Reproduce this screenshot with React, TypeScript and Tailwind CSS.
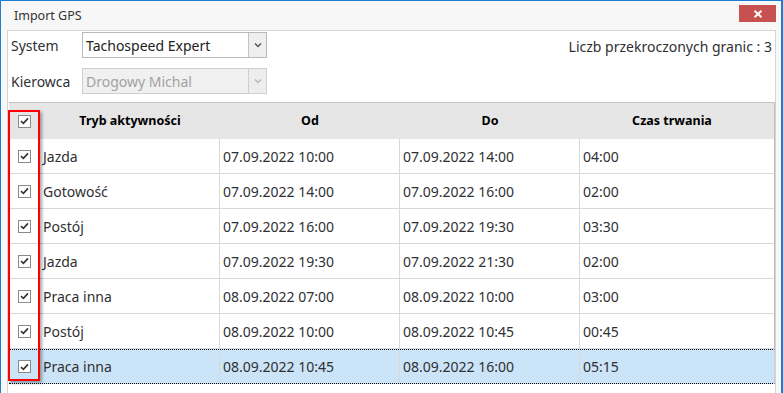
import React from 'react';

const rows = [
  { tryb: 'Jazda', od: '07.09.2022 10:00', do: '07.09.2022 14:00', czas: '04:00' },
  { tryb: 'Gotowość', od: '07.09.2022 14:00', do: '07.09.2022 16:00', czas: '02:00' },
  { tryb: 'Postój', od: '07.09.2022 16:00', do: '07.09.2022 19:30', czas: '03:30' },
  { tryb: 'Jazda', od: '07.09.2022 19:30', do: '07.09.2022 21:30', czas: '02:00' },
  { tryb: 'Praca inna', od: '08.09.2022 07:00', do: '08.09.2022 10:00', czas: '03:00' },
  { tryb: 'Postój', od: '08.09.2022 10:00', do: '08.09.2022 10:45', czas: '00:45' },
  { tryb: 'Praca inna', od: '08.09.2022 10:45', do: '08.09.2022 16:00', czas: '05:15' },
];

function Check() {
  return (
    <div className="w-[13px] h-[13px] border border-[#8a8a8a] bg-white flex items-center justify-center">
      <svg width="9" height="8" viewBox="0 0 9 8">
        <path d="M1 4.2 L3.4 6.4 L8 1.4" fill="none" stroke="#333" strokeWidth="1.6" />
      </svg>
    </div>
  );
}

function Combo({ value, disabled }: { value: string; disabled?: boolean }) {
  return (
    <div
      className={`flex h-[26px] w-[185px] border ${
        disabled ? 'border-[#cfcfcf] bg-[#f0f0f0] text-[#a2a2a2]' : 'border-[#b9b9b9] bg-white text-[#222]'
      }`}
    >
      <div className="flex-1 flex items-center pl-[3px] text-[14px]">{value}</div>
      <div
        className={`w-[18px] flex items-center justify-center border-l ${
          disabled ? 'border-[#cfcfcf] bg-[#ededed]' : 'border-[#c4c4c4] bg-[#efefef]'
        }`}
      >
        <svg width="8" height="6" viewBox="0 0 8 6">
          <path d="M1 1.5 L4 4.5 L7 1.5" fill="none" stroke={disabled ? '#b8b8b8' : '#555'} strokeWidth="1.5" />
        </svg>
      </div>
    </div>
  );
}

export default function App() {
  return (
    <div
      className="w-[783px] h-[393px] overflow-hidden bg-[#f7f7f7] border-t border-l border-r-2 border-[#1a7fd4] flex flex-col text-[#2f3033]"
      style={{ fontFamily: '"Noto Sans", "Open Sans", sans-serif' }}
    >
      <div className="h-[29px] flex items-center justify-between shrink-0">
        <div className="pl-[13px] pt-[1px] text-[12.5px] text-[#333]">Import GPS</div>
        <div className="mr-[5px] mb-[4px] w-[37px] h-[17px] bg-[#c75050] flex items-center justify-center">
          <svg width="10" height="8" viewBox="0 0 10 8">
            <path d="M1.5 0.8 L8.5 7.2 M8.5 0.8 L1.5 7.2" stroke="white" strokeWidth="2" />
          </svg>
        </div>
      </div>

      <div className="ml-[6px] w-[769px] flex-1 bg-white border-t border-l border-r border-[#d4d4d4] flex flex-col">
        <div className="flex justify-between pt-[1px] pr-[3px]">
          <div className="flex flex-col gap-[10px]">
            <div className="flex items-center">
              <span className="w-[74px] pl-[3px] text-[14px]">System</span>
              <Combo value="Tachospeed Expert" />
            </div>
            <div className="flex items-center">
              <span className="w-[74px] pl-[3px] text-[14px]">Kierowca</span>
              <Combo value="Drogowy Michal" disabled />
            </div>
          </div>
          <div className="text-[14px] pt-[4px]">Liczb przekroczonych granic : 3</div>
        </div>

        <div className="relative mt-[8px] ml-[1px] border-t border-[#c4c4c4]">
          <div className="flex h-[36px] bg-[#e6e6e6] border-r border-[#bcbcbc] text-[12.5px] font-bold text-black">
            <div className="w-[31px] flex items-center justify-center">
              <Check />
            </div>
            <div className="w-[180px] flex items-center justify-center">Tryb aktywności</div>
            <div className="w-[180px] flex items-center justify-center">Od</div>
            <div className="w-[180px] flex items-center justify-center">Do</div>
            <div className="flex-1 flex items-center justify-center pr-[10px]">Czas trwania</div>
          </div>
          {rows.map((r, i) => {
            const sel = i === rows.length - 1;
            return (
              <div
                key={i}
                className={`flex h-[35px] text-[14px] border-r border-[#bcbcbc] ${
                  sel ? 'bg-[#cce4f7] border-y border-y-black border-dotted' : 'bg-white border-b border-b-[#d8d8d8]'
                }`}
              >
                <div className="w-[31px] flex items-center justify-center">
                  <Check />
                </div>
                <div className="w-[180px] flex items-center pl-[3px] border-r border-r-[#d8d8d8] border-solid">{r.tryb}</div>
                <div className="w-[180px] flex items-center pl-[3px] border-r border-r-[#d8d8d8] border-solid">{r.od}</div>
                <div className="w-[180px] flex items-center pl-[3px] border-r border-r-[#d8d8d8] border-solid">{r.do}</div>
                <div className="flex-1 flex items-center pl-[3px]">{r.czas}</div>
              </div>
            );
          })}
          <div className="absolute left-[-1px] top-[7px] w-[32px] h-[271px] border-[2.5px] border-[#ff0000] shadow-[2px_2px_3px_rgba(0,0,0,0.35)]" />
        </div>
      </div>
    </div>
  );
}
